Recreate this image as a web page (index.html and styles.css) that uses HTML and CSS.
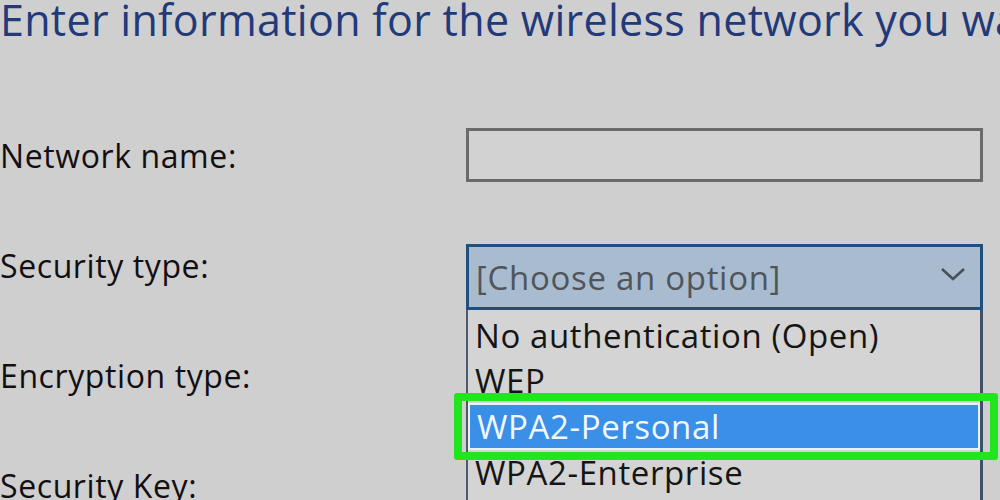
FILE: index.html
```html
<!DOCTYPE html>
<html>
<head>
<meta charset="utf-8">
<link rel="stylesheet" href="styles.css">
</head>
<body>
<div class="page">
  <h1 class="title">Enter information for the wireless network you want to add</h1>
  <div class="form">
    <div class="row">
      <div class="label">Network name:</div>
      <div class="control"><div class="input"></div></div>
    </div>
    <div class="row">
      <div class="label">Security type:</div>
      <div class="control top">
        <div class="select">
          <span class="select-text">[Choose an option]</span>
          <svg class="chev" width="26" height="14" viewBox="0 0 26 14"><path d="M2 2 L13 12 L24 2" fill="none" stroke="#4a4f57" stroke-width="2.6"/></svg>
          <div class="list">
            <div class="item">No authentication (Open)</div>
            <div class="item">WEP</div>
            <div class="item selected">WPA2-Personal</div>
            <div class="item">WPA2-Enterprise</div>
            <div class="item">WPA</div>
          </div>
        </div>
      </div>
    </div>
    <div class="row">
      <div class="label">Encryption type:</div>
      <div class="control"></div>
    </div>
    <div class="row">
      <div class="label">Security Key:</div>
      <div class="control"></div>
    </div>
  </div>
  <div class="marker"></div>
</div>
</body>
</html>
```
FILE: styles.css
```css
html, body {
  margin: 0;
  padding: 0;
  width: 1000px;
  height: 500px;
  overflow: hidden;
  background: #cfcfcf;
}
.page {
  position: relative;
  width: 1000px;
  height: 500px;
  overflow: hidden;
  font-family: "Open Sans", "Noto Sans", sans-serif;
}
.title {
  margin: 0;
  height: 100px;
  font-size: 43px;
  font-weight: 400;
  line-height: 40px;
  color: #22397a;
  white-space: nowrap;
  letter-spacing: 0.3px;
}
.form {
  display: grid;
  grid-template-columns: 466px 517px;
  grid-auto-rows: 110px;
}
.row {
  display: contents;
}
.label {
  display: flex;
  align-items: center;
  font-size: 32px;
  color: #120e12;
  white-space: nowrap;
  letter-spacing: 0.6px;
}
.control {
  display: flex;
  align-items: center;
  position: relative;
}
.control.top {
  align-items: flex-start;
  padding-top: 34px;
}
.input {
  width: 100%;
  height: 54px;
  box-sizing: border-box;
  border: 3px solid #6a6a6a;
  background: #d2d2d2;
}
.select {
  position: relative;
  width: 100%;
  height: 66px;
  box-sizing: border-box;
  border: 3px solid #1f4f7f;
  background: #a9bccf;
  display: flex;
  align-items: center;
  justify-content: space-between;
  padding: 0 14px 0 7px;
}
.select-text {
  font-size: 33px;
  color: #50555c;
  letter-spacing: 0.7px;
}
.chev {
  margin-top: -6px;
}
.list {
  position: absolute;
  left: -3px;
  right: -3px;
  top: 63px;
  box-sizing: border-box;
  border-left: 2px solid #4b5a6c;
  border-right: 3px solid #3f5166;
  background: #d4d4d4;
  padding-top: 3px;
  z-index: 2;
}
.item {
  height: 45px;
  line-height: 45px;
  font-size: 33px;
  color: #151515;
  padding-left: 7px;
  letter-spacing: 0.6px;
  white-space: nowrap;
}
.item.selected {
  background: #3a8fe6;
  color: #f2f8ff;
  height: 47px;
  line-height: 43px;
  box-sizing: border-box;
  border: 2px solid #e8f2f8;
}
.marker {
  position: absolute;
  left: 454px;
  top: 393px;
  width: 544px;
  height: 67px;
  box-sizing: border-box;
  border: 8px solid #22e41f;
  border-radius: 3px;
  z-index: 3;
}
```
